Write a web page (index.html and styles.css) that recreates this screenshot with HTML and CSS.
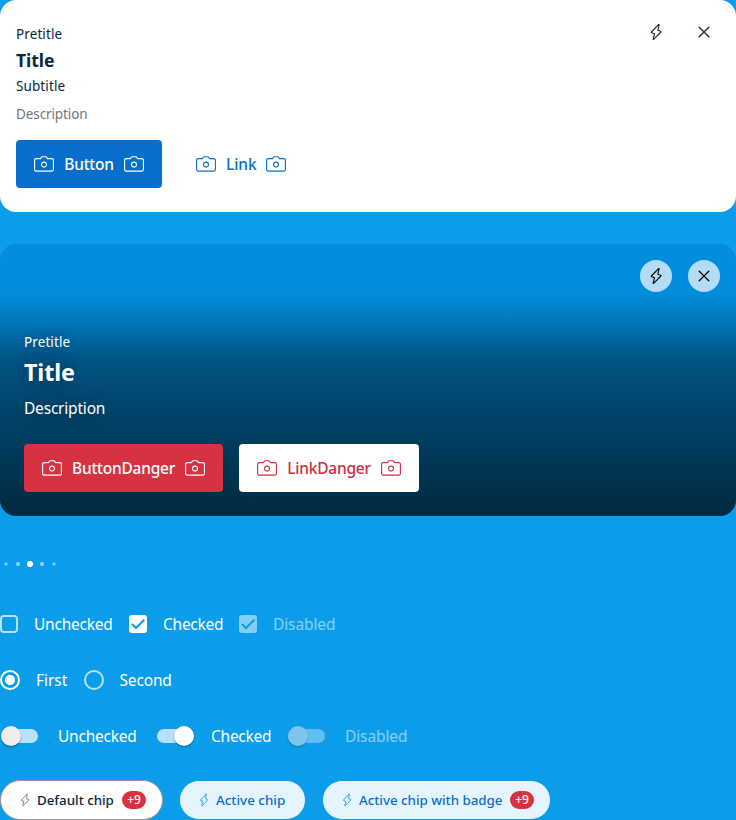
FILE: index.html
```html
<!DOCTYPE html>
<html lang="en">
<head>
<meta charset="utf-8">
<title>Components</title>
<link rel="stylesheet" href="styles.css">
</head>
<body>
<svg class="defs" width="0" height="0" aria-hidden="true">
  <symbol id="camera" viewBox="0 0 20 16">
    <path d="M6.600 2.600 7.200 1.400Q7.500.800 8.200.800h3.600q.7 0 1 .6l.6 1.200h4.500q1.500 0 1.500 1.500v9.500q0 1.500-1.500 1.500H2.100Q.600 15.100.600 13.600V4.100Q.600 2.600 2.100 2.600Z"/>
    <circle cx="10" cy="8.600" r="2.500"/>
  </symbol>
  <symbol id="bolt" viewBox="0 0 12 18">
    <path d="M8.500 1.600 1.400 9q-.4.500.2.700l3 1-1.500 5.500q0 .6.500.2L10.900 9q.4-.500-.2-.7L7.800 7.300 9.100 1.900q0-.6-.6-.3Z"/>
  </symbol>
  <symbol id="close" viewBox="0 0 12 12">
    <path d="M1.200 1.200 10.800 10.800M10.800 1.200 1.200 10.800"/>
  </symbol>
  <symbol id="check" viewBox="0 0 18 18">
    <path d="M3 9 7 13 15.300 4.700"/>
  </symbol>
</svg>

<section class="card">
  <div class="card-actions">
    <button class="icon-button"><svg class="bolt"><use href="#bolt"/></svg></button>
    <button class="icon-button"><svg class="close"><use href="#close"/></svg></button>
  </div>
  <div class="pretitle">Pretitle</div>
  <div class="title">Title</div>
  <div class="subtitle">Subtitle</div>
  <div class="description">Description</div>
  <div class="buttons">
    <button class="button primary"><svg class="camera"><use href="#camera"/></svg><span class="w-button">Button</span><svg class="camera"><use href="#camera"/></svg></button>
    <button class="button link"><svg class="camera"><use href="#camera"/></svg><span class="w-link">Link</span><svg class="camera"><use href="#camera"/></svg></button>
  </div>
</section>

<section class="card poster">
  <div class="card-actions">
    <button class="icon-button"><svg class="bolt"><use href="#bolt"/></svg></button>
    <button class="icon-button"><svg class="close"><use href="#close"/></svg></button>
  </div>
  <div class="pretitle">Pretitle</div>
  <div class="title">Title</div>
  <div class="description">Description</div>
  <div class="buttons">
    <button class="button danger"><svg class="camera"><use href="#camera"/></svg><span class="w-button-danger">ButtonDanger</span><svg class="camera"><use href="#camera"/></svg></button>
    <button class="button link-danger"><svg class="camera"><use href="#camera"/></svg><span class="w-link-danger">LinkDanger</span><svg class="camera"><use href="#camera"/></svg></button>
  </div>
</section>

<div class="dots">
  <span class="dot small"></span><span class="dot medium"></span><span class="dot active"></span><span class="dot medium"></span><span class="dot small"></span>
</div>

<div class="row">
  <label class="option"><span class="checkbox"></span><span class="w-unchecked">Unchecked</span></label>
  <label class="option"><span class="checkbox checked"><svg><use href="#check"/></svg></span><span class="w-checked">Checked</span></label>
  <label class="option disabled"><span class="checkbox checked"><svg><use href="#check"/></svg></span><span class="w-disabled">Disabled</span></label>
</div>

<div class="row radios">
  <label class="option"><span class="radio selected"></span><span class="w-first">First</span></label>
  <label class="option"><span class="radio"></span><span class="w-second">Second</span></label>
</div>

<div class="row switches">
  <label class="option"><span class="switch"><span class="knob"></span></span><span class="w-unchecked">Unchecked</span></label>
  <label class="option"><span class="switch on"><span class="knob"></span></span><span class="w-checked">Checked</span></label>
  <label class="option disabled"><span class="switch"><span class="knob"></span></span><span class="w-disabled">Disabled</span></label>
</div>

<div class="chips">
  <div class="chip default"><svg class="bolt"><use href="#bolt"/></svg><span class="w-default-chip">Default chip</span><span class="badge">+9</span></div>
  <div class="chip active"><svg class="bolt"><use href="#bolt"/></svg><span class="w-active-chip">Active chip</span></div>
  <div class="chip active with-badge"><svg class="bolt"><use href="#bolt"/></svg><span class="w-badge-chip">Active chip with badge</span><span class="badge">+9</span></div>
</div>
</body>
</html>
```
FILE: styles.css
```css
* { box-sizing: border-box; }
body {
  margin: 0;
  height: 820px;
  overflow: hidden;
  background: #0b9dea;
  color: #fff;
  font-family: "Noto Sans", sans-serif;
  font-size: 15.5px;
  line-height: 24px;
  white-space: nowrap;
}
.defs { position: absolute; }
svg { display: block; flex: none; fill: none; stroke: currentColor; stroke-linecap: round; stroke-linejoin: round; }
button { font: inherit; color: inherit; background: none; border: 0; padding: 0; }

.card {
  position: relative;
  height: 212px;
  padding: 24px 16px;
  border-radius: 16px;
  background: #fff;
  color: #0b2739;
}
.card-actions { position: absolute; top: 16px; right: 16px; display: flex; gap: 16px; }
.icon-button { display: flex; align-items: center; justify-content: center; width: 32px; height: 32px; border-radius: 50%; }
.bolt { width: 12px; height: 18px; stroke-width: 1.1; }
.close { width: 12px; height: 12px; stroke-width: 1.3; }
.camera { width: 20px; height: 16px; stroke-width: 1.1; }

.pretitle { font-size: 13.5px; line-height: 20px; letter-spacing: 0.1px; }
.title { margin-top: 4px; font-size: 17.5px; line-height: 24px; font-weight: 700; letter-spacing: -0.05px; }
.subtitle { margin-top: 4px; font-size: 13.5px; line-height: 20px; letter-spacing: 0.1px; }
.description { margin-top: 8px; font-size: 13.5px; line-height: 20px; letter-spacing: -0.1px; color: #757575; }
.buttons { display: flex; gap: 16px; margin-top: 16px; }
.button {
  display: flex;
  align-items: center;
  gap: 10px;
  height: 48px;
  padding: 0 18px;
  border-radius: 4px;
  font-weight: 500;
}
.primary { background: #066fcb; color: #fff; }
.link { color: #066fcb; }
.danger { background: #d73241; color: #fff; }
.link-danger { background: #fff; color: #cc2f40; }
.w-button { width: 50px; letter-spacing: -0.25px; }
.w-link { width: 30px; letter-spacing: -0.1px; }
.w-button-danger { width: 103px; letter-spacing: -0.25px; }
.w-link-danger { width: 84px; letter-spacing: -0.23px; }

.poster {
  height: 272px;
  margin-top: 32px;
  padding: 88px 24px 24px;
  color: #fff;
  background: linear-gradient(180deg, #028edc 0, #028edc 48px, #0079be 76px, #005687 114px, #004a72 150px, #003c5c 200px, #002a40 272px);
  text-shadow: 0 0 16px rgba(0, 0, 0, 0.4);
}
.poster .icon-button { background: #b3ddf6; color: #000; }
.poster .title { margin-top: 4px; font-size: 23.3px; line-height: 32px; letter-spacing: -0.1px; }
.poster .description { margin-top: 8px; color: #fff; font-size: 15.5px; line-height: 24px; letter-spacing: -0.2px; }
.poster .buttons { margin-top: 24px; text-shadow: none; }

.dots { display: flex; align-items: center; height: 8px; margin: 44px 0 0; }
.dot { width: 12px; height: 8px; }
.dot.medium { background: radial-gradient(circle, #85cef5 1.7px, transparent 2.5px); }
.dot.small { background: radial-gradient(circle, #85cef5 1.1px, transparent 2px); }
.dot.active { background: radial-gradient(circle, #fff 2.7px, transparent 3.4px); }

.row { display: flex; gap: 16px; height: 24px; margin-top: 32px; }
.dots + .row { margin-top: 44px; }
.option { display: flex; align-items: center; gap: 16px; }
.option.disabled { opacity: 0.5; }
.checkbox { width: 18px; height: 18px; border: 2px solid #b6e1f9; border-radius: 4px; }
.checkbox.checked { border: 0; border-radius: 3px; background: #fff; color: #0b9dea; }
.checkbox svg { width: 18px; height: 18px; stroke-width: 2; stroke-linecap: butt; stroke-linejoin: miter; }
.radio { width: 20px; height: 20px; border: 2px solid #b6e1f9; border-radius: 50%; }
.radio.selected { border-color: #fff; background: radial-gradient(circle, #fff 4.7px, transparent 5.3px); }
.w-unchecked { width: 79px; letter-spacing: -0.24px; }
.w-checked { width: 60px; letter-spacing: -0.25px; }
.w-disabled { width: 63px; letter-spacing: -0.1px; }
.w-first { width: 32px; letter-spacing: -0.05px; }
.w-second { width: 53px; margin-left: -0.5px; letter-spacing: -0.17px; }

.switches { padding-left: 1px; gap: 20px; }
.switches .option { gap: 20px; }
.switches .option:nth-child(2) { gap: 17px; }
.switch { display: flex; align-items: center; width: 37px; height: 14px; border-radius: 7px; background: #b6e1f9; }
.switch.on { justify-content: flex-end; }
.knob { width: 20px; height: 20px; border-radius: 50%; background: #eee; box-shadow: 0 1px 2px rgba(0, 0, 0, 0.4); }
.on .knob { background: #fff; }
.switches .w-checked { width: 57px; }

.chips { display: flex; gap: 16px; margin-top: 32px; }
.chip {
  display: flex;
  align-items: center;
  height: 40px;
  padding: 0 20px 0 19px;
  border: 1px solid #0b9dea;
  border-radius: 20px;
  background: #e6f4fd;
  color: #066fcb;
  font-size: 13.4px;
  line-height: 20px;
  font-weight: 500;
}
.chip .bolt { width: 10px; height: 14px; margin-right: 7px; color: #0b9dea; }
.chip.with-badge { padding-right: 16px; }
.chip.default { border-color: #999; background: #fff; color: #0b2739; padding-right: 16px; }
.chip.default .bolt { color: #757575; }
.badge {
  width: 24px;
  height: 18px;
  margin-left: 8px;
  border-radius: 9px;
  background: #d73241;
  color: #fff;
  font-size: 12px;
  line-height: 18px;
  text-align: center;
}
.w-default-chip { width: 77px; letter-spacing: -0.05px; }
.w-active-chip { width: 69px; letter-spacing: 0; }
.w-badge-chip { width: 143px; letter-spacing: -0.04px; }
```
